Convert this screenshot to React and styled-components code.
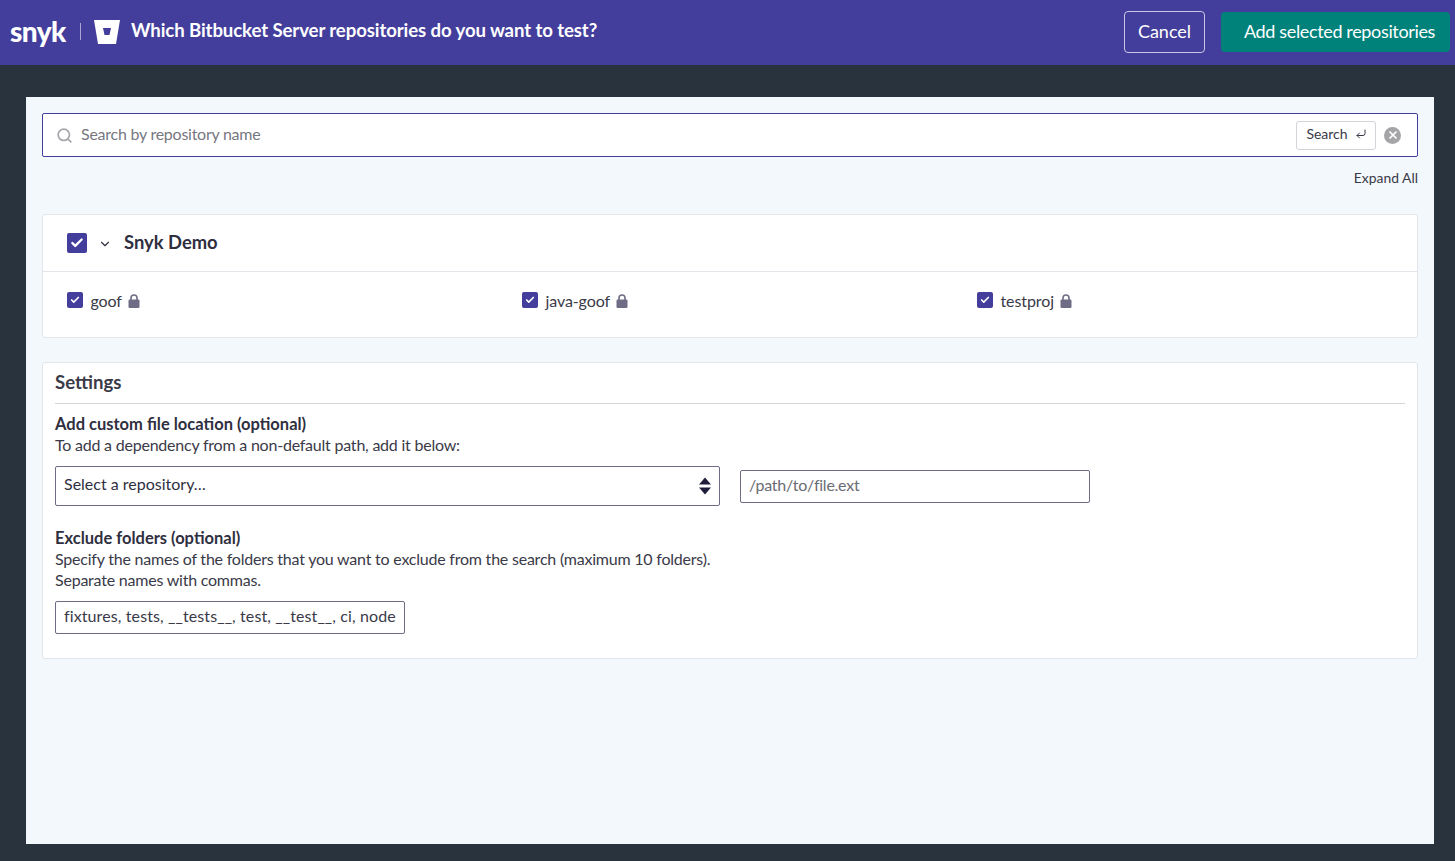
import React from "react";
import styled, { createGlobalStyle } from "styled-components";
import { Check, ChevronDown, CornerDownLeft, Search, X } from "lucide-react";

const Global = createGlobalStyle`
    html, body {
        margin: 0;
        height: 100%;
        overflow: hidden;
        background: #28333d;
    }
    body {
        font-family: Lato, "Open Sans", sans-serif;
        color: #2f2f3f;
    }
    * {
        box-sizing: border-box;
    }
`;

const Page = styled.div`
    height: 861px;
    display: flex;
    flex-direction: column;
`;

const TopBar = styled.header`
    height: 65px;
    flex: none;
    background: #433e9c;
    display: flex;
    align-items: center;
    padding: 0 5px 2px 10px;
    color: #fff;
`;

const Logo = styled.span`
    font-size: 28px;
    font-weight: 900;
    letter-spacing: -0.6px;
    width: 56px;
    line-height: 30px;
    padding-bottom: 1px;
`;

const Divider = styled.span`
    width: 1px;
    height: 17px;
    background: #a9a6d2;
    margin: 0 13px 0 14px;
`;

const BucketIcon = styled.svg`
    width: 26px;
    height: 24px;
    margin-right: 11px;
    flex: none;
`;

const Heading = styled.h1`
    margin: 0;
    padding-bottom: 3px;
    font-size: 18.6px;
    font-weight: 700;
    letter-spacing: -0.1px;
    flex: 1;
`;

const GhostButton = styled.button`
    font: inherit;
    font-size: 18px;
    width: 81px;
    height: 42px;
    color: #fff;
    background: transparent;
    border: 1px solid #c9c7e4;
    border-radius: 4px;
    margin-right: 16px;
    padding: 0 0 2px;
`;

const PrimaryButton = styled.button`
    font: inherit;
    font-size: 18px;
    letter-spacing: -0.35px;
    width: 229px;
    height: 40px;
    color: #fff;
    background: #00827b;
    border: 0;
    border-radius: 4px;
    padding: 0 0 2px 8px;
`;

const Panel = styled.main`
    width: 1408px;
    height: 747px;
    margin: 32px 0 0 26px;
    background: #f3f8fc;
    padding: 16px;
    display: flex;
    flex-direction: column;
`;

const SearchBar = styled.div`
    height: 44px;
    background: #fff;
    border: 1px solid #433e9c;
    border-radius: 2px;
    display: flex;
    align-items: center;
    padding: 0 16px 0 13px;
`;

const SearchHint = styled.span`
    flex: 1;
    margin-left: 8px;
    padding-bottom: 3px;
    font-size: 16px;
    letter-spacing: -0.25px;
    color: #77777f;
`;

const SearchButton = styled.span`
    width: 80px;
    height: 29px;
    border: 1px solid #d3d3da;
    border-radius: 3px;
    display: flex;
    align-items: center;
    justify-content: center;
    gap: 7px;
    padding: 0 0 3px 1px;
    font-size: 14px;
    color: #3a3a48;
`;

const ClearIcon = styled.span`
    width: 17px;
    height: 17px;
    margin-left: 8px;
    border-radius: 50%;
    background: #a5a5a8;
    color: #fff;
    display: flex;
    align-items: center;
    justify-content: center;
`;

const ExpandAll = styled.div`
    text-align: right;
    font-size: 13.9px;
    line-height: 18px;
    margin: 12px 0 27px;
    color: #3a3a48;
`;

const Card = styled.section`
    background: #fff;
    border: 1px solid #e2e6ea;
    border-radius: 3px;
`;

const OrgRow = styled.div`
    height: 57px;
    display: flex;
    align-items: center;
    padding-left: 24px;
    border-bottom: 1px solid #e2e6ea;
`;

const Box = styled.span`
    width: ${p => p.size}px;
    height: ${p => p.size}px;
    flex: none;
    background: #433e9c;
    border-radius: 2px;
    color: #fff;
    display: flex;
    align-items: center;
    justify-content: center;
`;

const OrgChevron = styled(ChevronDown)`
    margin: 1px 12px 0 11px;
    color: #2f2f3f;
`;

const OrgName = styled.span`
    font-size: 18.4px;
    font-weight: 700;
    padding-bottom: 2px;
`;

const RepoGrid = styled.div`
    display: grid;
    grid-template-columns: repeat(3, 455px);
    padding: 19px 24px 27px;
    height: 65px;
`;

const Repo = styled.div`
    display: flex;
    align-items: center;
    font-size: 16px;
    letter-spacing: -0.1px;
    height: 18px;
    color: #3a3a48;
`;

const RepoName = styled.span`
    margin: 0 6px 0 7.5px;
`;

const LockIcon = styled.svg`
    width: 12px;
    height: 14px;
    margin-top: 2px;
`;

const SettingsCard = styled(Card)`
    margin-top: 24px;
    height: 297px;
    padding: 0 12px;
`;

const SettingsTitle = styled.h2`
    margin: 0;
    height: 41px;
    font-size: 18.6px;
    font-weight: 700;
    line-height: 39px;
    border-bottom: 1px solid #d5d5da;
    color: #3a3a48;
`;

const FieldLabel = styled.div`
    font-size: 16.5px;
    font-weight: 700;
    line-height: 21px;
    padding-top: 1px;
    height: 21px;
`;

const HelpText = styled.div`
    font-size: 16px;
    letter-spacing: -0.22px;
    line-height: 21px;
    color: #3a3a48;
`;

const Fieldset = styled.div`
    margin-top: ${p => p.top}px;
`;

const FieldRow = styled.div`
    display: flex;
    align-items: center;
    gap: 20px;
    margin-top: 11px;
`;

const SelectBox = styled.div`
    width: 665px;
    height: 40px;
    background: #fff;
    border: 1px solid #6f6c85;
    border-radius: 2px;
    display: flex;
    align-items: center;
    justify-content: space-between;
    padding: 0 7px 5px 8px;
    font-size: 16px;
`;

const SortIcon = styled.svg`
    width: 14px;
    height: 20px;
    margin-top: 5px;
`;

const TextField = styled.div`
    width: ${p => p.width}px;
    height: 33px;
    background: #fff;
    border: 1px solid #6f6c85;
    border-radius: 2px;
    padding: 0 8px 4px;
    display: flex;
    align-items: center;
    font-size: 16px;
    letter-spacing: ${p => p.spacing}px;
    white-space: nowrap;
    overflow: hidden;
    color: ${p => (p.muted ? "#6b6b73" : "#3a3a48")};
`;

const ExcludeField = styled(TextField)`
    margin-top: 11px;
`;

const Sort = () => (
    <SortIcon viewBox="0 0 14 20">
        <path d="M7 1.5 13 8.5H1zM7 18.5 1 11.5H13z" fill="#1e1e3a" />
    </SortIcon>
);

const Lock = () => (
    <LockIcon viewBox="0 0 12 14">
        <path
            d="M3 6.5V4a3 3 0 0 1 6 0V6.5"
            fill="none"
            stroke="#6f6c85"
            strokeWidth="1.6"
        />
        <rect x="0.5" y="5.5" width="11" height="8.5" rx="1.2" fill="#6f6c85" />
    </LockIcon>
);

const Checkbox = ({ size }) => (
    <Box size={size}>
        <Check size={size - 6} strokeWidth={4} />
    </Box>
);

const repos = ["goof", "java-goof", "testproj"];

export default function App() {
    return (
        <Page>
            <Global />
            <TopBar>
                <Logo>snyk</Logo>
                <Divider />
                <BucketIcon viewBox="0 0 26 24">
                    <path
                        fillRule="evenodd"
                        d="M0 0H26L22 24H4ZM9 8 10.5 15H15.5L17 8Z"
                        fill="#fff"
                    />
                </BucketIcon>
                <Heading>Which Bitbucket Server repositories do you want to test?</Heading>
                <GhostButton>Cancel</GhostButton>
                <PrimaryButton>Add selected repositories</PrimaryButton>
            </TopBar>
            <Panel>
                <SearchBar>
                    <Search size={17} strokeWidth={2.4} color="#a5a5aa" />
                    <SearchHint>Search by repository name</SearchHint>
                    <SearchButton>
                        Search <CornerDownLeft size={12} color="#3a3a48" />
                    </SearchButton>
                    <ClearIcon>
                        <X size={12} strokeWidth={3.5} />
                    </ClearIcon>
                </SearchBar>
                <ExpandAll>Expand All</ExpandAll>
                <Card>
                    <OrgRow>
                        <Checkbox size={20} />
                        <OrgChevron size={14} />
                        <OrgName>Snyk Demo</OrgName>
                    </OrgRow>
                    <RepoGrid>
                        {repos.map(name => (
                            <Repo key={name}>
                                <Checkbox size={16} />
                                <RepoName>{name}</RepoName>
                                <Lock />
                            </Repo>
                        ))}
                    </RepoGrid>
                </Card>
                <SettingsCard>
                    <SettingsTitle>Settings</SettingsTitle>
                    <Fieldset top={9}>
                        <FieldLabel>Add custom file location (optional)</FieldLabel>
                        <HelpText>To add a dependency from a non-default path, add it below:</HelpText>
                        <FieldRow>
                            <SelectBox>
                                Select a repository…
                                <Sort />
                            </SelectBox>
                            <TextField width={350} spacing={-0.25} muted>/path/to/file.ext</TextField>
                        </FieldRow>
                    </Fieldset>
                    <Fieldset top={21}>
                        <FieldLabel>Exclude folders (optional)</FieldLabel>
                        <HelpText>
                            Specify the names of the folders that you want to exclude from the search (maximum 10 folders).
                        </HelpText>
                        <HelpText>Separate names with commas.</HelpText>
                        <ExcludeField width={350} spacing={0.11}>fixtures, tests, __tests__, test, __test__, ci, node</ExcludeField>
                    </Fieldset>
                </SettingsCard>
            </Panel>
        </Page>
    );
}
